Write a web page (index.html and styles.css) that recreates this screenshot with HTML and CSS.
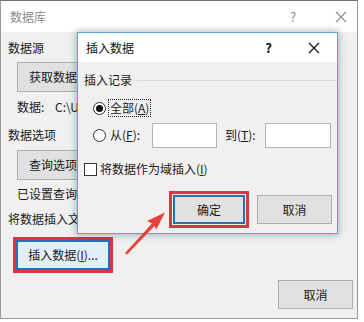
FILE: index.html
```html
<!DOCTYPE html>
<html>
<head>
<meta charset="utf-8">
<link rel="stylesheet" href="styles.css">
</head>
<body>
<div class="win">
  <div class="titlebar">
    <span class="title">数据库</span>
    <span class="help">?</span>
    <svg class="close" width="12" height="12" viewBox="0 0 12 12"><path d="M1 1L11 11M11 1L1 11" stroke="#8a8a8a" stroke-width="1.1" fill="none"/></svg>
  </div>
  <div class="body">
    <div class="label l-src">数据源</div>
    <button class="btn b-get"><span class="clip c-btn">获取数据(<u>D</u>)...</span></button>
    <div class="label l-data indent clip c-ind"><span class="dk">数据:</span>C:\Users\Doc</div>
    <div class="label l-opt">数据选项</div>
    <button class="btn b-query"><span class="clip c-btn">查询选项(<u>Q</u>)...</span></button>
    <div class="label l-set indent clip c-ind">已设置查询选项</div>
    <div class="label l-ins clip c-top">将数据插入文档</div>
    <button class="btn b-insert hl">插入数据(<u>I</u>)...</button>
    <div class="foot">
      <button class="btn b-cancel-outer">取消</button>
    </div>
  </div>
</div>

<div class="dlg">
  <div class="dtitle">
    <span class="dtitle-text">插入数据</span>
    <span class="dhelp">?</span>
    <svg class="dclose" width="12" height="12" viewBox="0 0 12 12"><path d="M1 1L11 11M11 1L1 11" stroke="#111" stroke-width="1.2" fill="none"/></svg>
  </div>
  <div class="dbody">
    <div class="group">
      <span>插入记录</span>
      <span class="gline"></span>
    </div>
    <div class="row r-all">
      <span class="radio on"></span>
      <span class="focus">全部(<u>A</u>)</span>
    </div>
    <div class="row r-from">
      <span class="radio"></span>
      <span class="lbl-from">从(<u>F</u>):</span>
      <span class="input in1"></span>
      <span class="lbl-to">到(<u>T</u>):</span>
      <span class="input in2"></span>
    </div>
    <div class="row r-chk">
      <span class="check"></span>
      <span>将数据作为域插入(<u>I</u>)</span>
    </div>
    <div class="brow">
      <button class="btn b-ok hl2">确定</button>
      <button class="btn b-cancel">取消</button>
    </div>
  </div>
</div>

<svg class="arrow" width="364" height="322" viewBox="0 0 364 322">
  <polygon points="124.8,253.2 152,223.5 147,221 165,212.5 156,230 154.8,225.8 127,254.6" fill="#e8413b"/>
</svg>
</body>
</html>
```
FILE: styles.css
```css
* { box-sizing: border-box; }
html, body { margin: 0; padding: 0; background: #ffffff; }
body {
  width: 364px; height: 322px; overflow: hidden; position: relative;
  font-family: "Noto Sans CJK SC", "Microsoft YaHei", sans-serif;
  font-size: 12px; line-height: 16px; color: #1a1a1a;
}
u { text-decoration: underline; text-underline-offset: 1px; }

.win {
  width: 358px; height: 319px;
  border: 1px solid #9a9a9a;
  border-top-color: #6f6f6f;
  background: #f0f0f0;
  display: flex; flex-direction: column;
}
.titlebar {
  height: 31px; background: #ffffff;
  display: flex; align-items: center;
  padding-left: 9px;
  color: #8a8a8a;
}
.title { flex: 1; }
.help { width: 10px; margin-right: 35px; color: #8a8a8a; font-size: 13px; }
.close { margin-right: 10px; }

.body { padding: 0 0 0 7px; display: flex; flex-direction: column; align-items: flex-start; }
.label { white-space: nowrap; }
.clip { overflow: hidden; white-space: nowrap; display: block; }
.c-ind { width: 61px; }
.c-top { width: 69px; }
.c-btn { width: 49px; }
.dk { display: inline-block; width: 38px; }
.indent { margin-left: 9px; }
.l-src { margin-top: 8px; }
.btn {
  font-family: inherit; font-size: 12px; line-height: 16px; color: #1a1a1a;
  background: #e1e1e1; border: 1px solid #adadad; padding: 0;
  height: 30px; white-space: nowrap;
}
.b-get { margin-top: 6px; margin-left: 9px; width: 100px; text-align: left; padding-left: 11px; }
.l-data { margin-top: 7px; }
.l-opt { margin-top: 12px; }
.b-query { margin-top: 7px; margin-left: 9px; width: 100px; text-align: left; padding-left: 11px; }
.l-set { margin-top: 6px; }
.l-ins { margin-top: 9px; }
.b-insert {
  margin-top: 13px; margin-left: 8px; width: 94px; height: 30px;
  border: 2px solid #2a6fb4; background: #e3eef8;
}
.hl { outline: 3px solid #d8383f; outline-offset: 0; }
.foot { align-self: stretch; display: flex; justify-content: flex-end; padding-right: 4px; margin-top: 10px; }
.b-cancel-outer { width: 75px; height: 29px; }

/* inner dialog */
.dlg {
  position: absolute; left: 77px; top: 32px;
  width: 261px; height: 202px;
  border: 1px solid #58a6d6;
  background: #f0f0f0;
  box-shadow: 0 0 7px 1px rgba(0,0,0,0.28);
  display: flex; flex-direction: column;
}
.dtitle {
  height: 29px; background: #ffffff;
  display: flex; align-items: center;
  padding-left: 8px; color: #111;
}
.dtitle-text { flex: 1; }
.dhelp { font-weight: bold; font-size: 13px; margin-right: 36px; }
.dclose { margin-right: 17px; }
.dbody { display: flex; flex-direction: column; }
.group { display: flex; align-items: center; margin-top: 10px; padding-left: 6px; }
.gline { flex: 1; height: 1px; background: #d9d9d9; margin-left: 5px; }
.row { display: flex; align-items: center; }
.r-all { margin-top: 10px; height: 20px; padding-left: 15px; }
.radio {
  width: 13px; height: 13px; border-radius: 50%;
  border: 1px solid #333; background: #fff;
  display: flex; align-items: center; justify-content: center;
  flex: none;
}
.radio.on::after { content: ""; width: 7px; height: 7px; border-radius: 50%; background: #111; }
.focus { margin-left: 2px; border: 1px dotted #222; padding: 0 1px; height: 18px; line-height: 16px; }
.r-from { margin-top: 4px; height: 26px; padding-left: 15px; }
.lbl-from { margin-left: 4px; width: 42px; }
.input { width: 65px; height: 25px; background: #fff; border: 1px solid #b4b4b4; }
.lbl-to { margin-left: 8px; width: 40px; }
.in2 { width: 66px; }
.r-chk { margin-top: 13px; height: 16px; padding-left: 6px; }
.check { width: 13px; height: 13px; border: 1px solid #333; background: #fff; margin-right: 3px; flex: none; }
.brow { display: flex; margin-top: 18px; padding-left: 95px; }
.b-ok { width: 72px; height: 29px; border: 2px solid #2a6fb4; }
.hl2 { outline: 3px solid #d8383f; outline-offset: 1px; }
.b-cancel { width: 75px; height: 29px; margin-left: 12px; }

.arrow { position: absolute; left: 0; top: 0; pointer-events: none; }
```
